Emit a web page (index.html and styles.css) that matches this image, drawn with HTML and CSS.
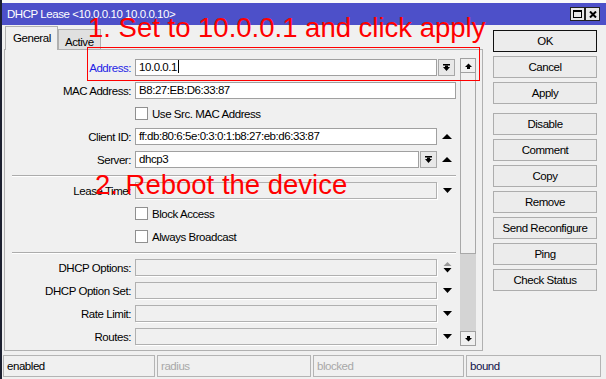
FILE: index.html
```html
<!DOCTYPE html>
<html>
<head>
    <link rel="stylesheet" href="styles.css">
</head>
<body>
    <div class="window">
        <div class="topline"></div>
        <div class="titlebar">
            <span class="title">DHCP Lease &lt;10.0.0.10 10.0.0.10&gt;</span>
            <div class="tbtns">
                <span class="tbtn"><svg width="9" height="8" viewBox="0 0 9 8"><rect x="0.5" y="0.5" width="8" height="7" fill="none" stroke="#000"/><rect x="0" y="0" width="9" height="2" fill="#000"/></svg></span>
                <span class="tbtn"><svg width="8" height="7" viewBox="0 0 8 7"><path d="M1 0.5 L7 6.5 M7 0.5 L1 6.5" stroke="#000" stroke-width="2"/></svg></span>
            </div>
        </div>

        <div class="main">
            <div class="left">
                <div class="tabs">
                    <div class="tab tab-on">General</div>
                    <div class="tab">Active</div>
                </div>
                <div class="panel">
                    <div class="form">
                        <div class="row">
                            <span class="lbl lbl-on">Address:</span>
                            <span class="inp w302">10.0.0.1<i class="caret"></i></span>
                            <span class="dd"><svg width="7" height="7" viewBox="0 0 7 7"><rect x="0" y="0" width="7" height="1.5"/><rect x="2" y="1.5" width="3" height="2"/><polygon points="0,3 7,3 3.5,7"/></svg></span>
                        </div>
                        <div class="row">
                            <span class="lbl">MAC Address:</span>
                            <span class="inp w321">B8:27:EB:D6:33:87</span>
                        </div>
                        <div class="row">
                            <span class="lbl"></span>
                            <span class="chk"></span>Use Src. MAC Address
                        </div>
                        <div class="row">
                            <span class="lbl">Client ID:</span>
                            <span class="inp w302">ff:db:80:6:5e:0:3:0:1:b8:27:eb:d6:33:87</span>
                            <span class="arr"><svg width="10" height="5" viewBox="0 0 10 5"><polygon points="0,5 5,0 10,5"/></svg></span>
                        </div>
                        <div class="row">
                            <span class="lbl">Server:</span>
                            <span class="inp w284">dhcp3</span>
                            <span class="dd"><svg width="7" height="7" viewBox="0 0 7 7"><rect x="0" y="0" width="7" height="1.5"/><rect x="2" y="1.5" width="3" height="2"/><polygon points="0,3 7,3 3.5,7"/></svg></span>
                            <span class="arr"><svg width="10" height="5" viewBox="0 0 10 5"><polygon points="0,5 5,0 10,5"/></svg></span>
                        </div>
                        <div class="sep"></div>
                        <div class="row">
                            <span class="lbl">Lease Time:</span>
                            <span class="inp off w302"></span>
                            <span class="arr"><svg width="9" height="5" viewBox="0 0 9 5"><polygon points="0,0 9,0 4.5,5"/></svg></span>
                        </div>
                        <div class="row">
                            <span class="lbl"></span>
                            <span class="chk"></span>Block Access
                        </div>
                        <div class="row">
                            <span class="lbl"></span>
                            <span class="chk"></span>Always Broadcast
                        </div>
                        <div class="sep"></div>
                        <div class="row">
                            <span class="lbl">DHCP Options:</span>
                            <span class="inp off w302"></span>
                            <span class="arr"><svg width="9" height="11" viewBox="0 0 9 11"><polygon points="0.5,4 4.5,0 8.5,4" fill="#9a9a9a"/><polygon points="0.5,6 8.5,6 4.5,10.5"/></svg></span>
                        </div>
                        <div class="row">
                            <span class="lbl">DHCP Option Set:</span>
                            <span class="inp off w302"></span>
                            <span class="arr"><svg width="9" height="5" viewBox="0 0 9 5"><polygon points="0,0 9,0 4.5,5"/></svg></span>
                        </div>
                        <div class="row">
                            <span class="lbl">Rate Limit:</span>
                            <span class="inp off w302"></span>
                            <span class="arr"><svg width="9" height="5" viewBox="0 0 9 5"><polygon points="0,0 9,0 4.5,5"/></svg></span>
                        </div>
                        <div class="row">
                            <span class="lbl">Routes:</span>
                            <span class="inp off w302"></span>
                            <span class="arr"><svg width="9" height="5" viewBox="0 0 9 5"><polygon points="0,0 9,0 4.5,5"/></svg></span>
                        </div>
                    </div>
                    <div class="sb">
                        <span class="sb-btn"><svg width="7" height="6" viewBox="0 0 7 6"><polygon points="0,4 3.5,0.5 7,4"/><rect x="2" y="4" width="3" height="2"/></svg></span>
                        <span class="sb-thumb"></span>
                        <span class="sb-track"></span>
                        <span class="sb-btn"><svg width="7" height="6" viewBox="0 0 7 6"><rect x="2" y="0" width="3" height="2"/><polygon points="0,2 7,2 3.5,5.5"/></svg></span>
                    </div>
                </div>
            </div>

            <div class="actions">
                <div class="btn btn-def">OK</div>
                <div class="btn">Cancel</div>
                <div class="btn">Apply</div>
                <div class="btn btn-gap">Disable</div>
                <div class="btn">Comment</div>
                <div class="btn">Copy</div>
                <div class="btn">Remove</div>
                <div class="btn">Send Reconfigure</div>
                <div class="btn">Ping</div>
                <div class="btn">Check Status</div>
            </div>
        </div>

        <div class="status">
            <div class="cell c1">enabled</div>
            <div class="cell c2 dim">radius</div>
            <div class="cell c3 dim">blocked</div>
            <div class="cell c4">bound</div>
        </div>

        <!-- annotations drawn over the window -->
        <div class="mark"></div>
        <div class="note note1">1. Set to 10.0.0.1 and click apply</div>
        <div class="note note2">2. Reboot the device</div>
    </div>
</body>
</html>
```

FILE: styles.css
```css
body {
    margin: 0;
    font-family: "Liberation Sans", Arial, sans-serif;
    font-size: 11.5px;
    letter-spacing: -0.45px;
    color: #000;
    background: #f0f0f0;
}

.window {
    position: relative;
    width: 606px;
    height: 379px;
    box-sizing: border-box;
    border-left: 2px solid #1c2030;
    background: #f0f0f0;
    overflow: hidden;
}

.topline {
    height: 3px;
    background: #fafafa;
}

.titlebar {
    height: 22px;
    background: #4d50c9;
    color: #fff;
    display: flex;
    align-items: center;
    padding: 0 6px 0 5px;
}

.title {
    flex: 1;
}

.tbtns {
    display: flex;
}

.tbtn {
    width: 15px;
    height: 14px;
    box-sizing: border-box;
    border: 1px solid #222;
    background: #e8e8e8;
    display: flex;
    align-items: center;
    justify-content: center;
}

.main {
    display: flex;
    height: 327px;
}

.left {
    width: 479px;
    margin-left: 2px;
    display: flex;
    flex-direction: column;
}

.tabs {
    display: flex;
    align-items: flex-end;
    height: 24px;
    padding-left: 1px;
}

.tab {
    box-sizing: border-box;
    height: 20px;
    width: 43px;
    border: 1px solid #b0b0b0;
    border-bottom: 0;
    background: #e0e0e0;
    padding-left: 6px;
    line-height: 24px;
    overflow: hidden;
}

.tab-on {
    height: 24px;
    width: 53px;
    margin-bottom: -1px;
    padding-left: 7px;
    background: #f0f0f0;
    line-height: 23px;
    position: relative;
    z-index: 1;
}

.panel {
    height: 302px;
    box-sizing: border-box;
    border: 1px solid #b0b0b0;
    display: flex;
}

.form {
    width: 455px;
    display: flex;
    flex-direction: column;
    gap: 6px;
    padding-top: 9px;
}

.row {
    display: flex;
    align-items: center;
    height: 17px;
    white-space: nowrap;
}

.lbl {
    width: 126px;
    margin-right: 4px;
    text-align: right;
}

.lbl-on {
    color: #1e1ee6;
}

.inp {
    height: 17px;
    box-sizing: border-box;
    border: 1px solid #a0a0a0;
    background: #fff;
    padding-left: 3px;
    line-height: 15px;
    overflow: hidden;
}

.inp.off {
    background: #f0f0f0;
    border-color: #b0b0b0;
    box-shadow: 1px 1px 0 #fff;
}

.w302 { width: 302px; }
.w321 { width: 321px; }
.w284 { width: 284px; }

.caret {
    display: inline-block;
    width: 1px;
    height: 13px;
    margin-left: 1px;
    background: #000;
    vertical-align: -2px;
}

.dd {
    width: 17px;
    height: 17px;
    box-sizing: border-box;
    margin-left: 1px;
    border: 1px solid #a8a8a8;
    background: #e8e8e8;
    display: flex;
    align-items: center;
    justify-content: center;
}

.arr {
    width: 16px;
    margin-left: 2px;
    display: flex;
    justify-content: center;
}

.chk {
    width: 13px;
    height: 13px;
    box-sizing: border-box;
    border: 1px solid #909090;
    background: #fff;
    margin-right: 4px;
}

.sep {
    width: 444px;
    height: 1px;
    margin: 1px 0 0 7px;
    background: #acacac;
    box-shadow: 0 1px 0 #fff;
}

.sb {
    width: 16px;
    height: 288px;
    margin-top: 8px;
    display: flex;
    flex-direction: column;
}

.sb-btn {
    flex: 0 0 15px;
    box-sizing: border-box;
    border: 1px solid #a0a0a0;
    background: #f0f0f0;
    display: flex;
    align-items: center;
    justify-content: center;
}

.sb-thumb {
    flex: 0 0 181px;
    box-sizing: border-box;
    border: 1px solid #a8a8a8;
    border-top: 0;
    background: #f0f0f0;
}

.sb-track {
    flex: 1;
    background: #d4d4d4;
}

.actions {
    width: 104px;
    margin-left: 10px;
    padding-top: 5px;
    display: flex;
    flex-direction: column;
    gap: 4px;
}

.btn {
    height: 22px;
    box-sizing: border-box;
    border: 1px solid #adadad;
    background: #ececec;
    text-align: center;
    line-height: 20px;
}

.btn-def {
    border-color: #111;
}

.btn-gap {
    margin-top: 5px;
}

.status {
    display: flex;
    gap: 2px;
    height: 22px;
    margin-top: 3px;
    padding-left: 1px;
}

.cell {
    box-sizing: border-box;
    border: 1px solid #b4b4b4;
    padding-left: 3px;
    line-height: 20px;
}

.c1 { width: 152px; }
.c2 { width: 154px; }
.c3 { width: 151px; }
.c4 { width: 135px; color: #10104a; }

.dim {
    color: #a8a8a8;
}

.mark {
    position: absolute;
    left: 85px;
    top: 47px;
    width: 393px;
    height: 34px;
    box-sizing: border-box;
    border: 1px solid #ff0000;
}

.note {
    position: absolute;
    color: #ff0000;
    font-size: 27.5px;
    letter-spacing: 0;
    line-height: 1;
    white-space: nowrap;
}

.note1 {
    left: 86px;
    top: 14px;
}

.note2 {
    left: 93px;
    top: 171px;
}
```
